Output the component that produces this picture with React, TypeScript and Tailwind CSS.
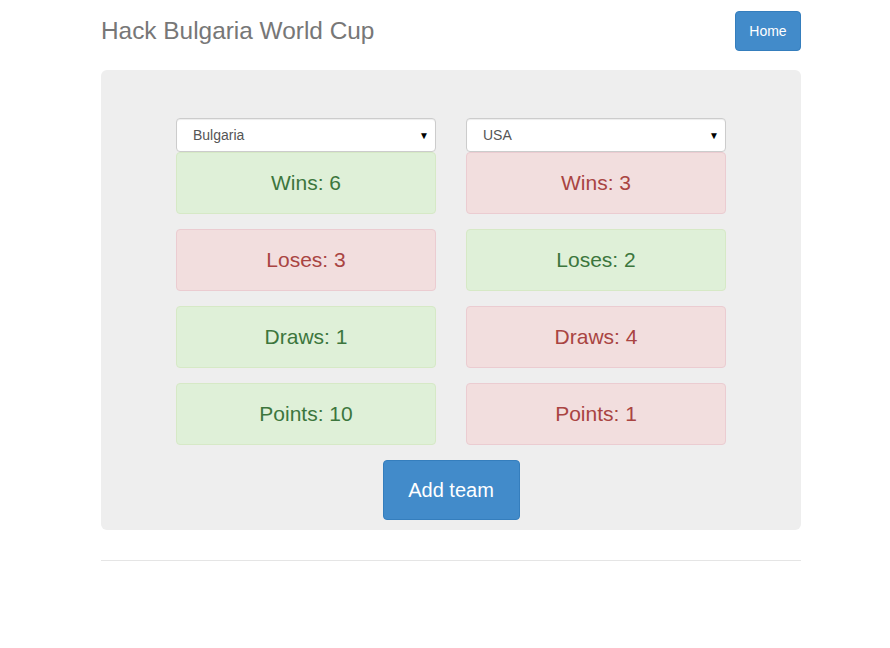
import React from "react";

const left = [
  { label: "Wins: 6", good: true },
  { label: "Loses: 3", good: false },
  { label: "Draws: 1", good: true },
  { label: "Points: 10", good: true },
];
const right = [
  { label: "Wins: 3", good: false },
  { label: "Loses: 2", good: true },
  { label: "Draws: 4", good: false },
  { label: "Points: 1", good: false },
];

function Select({ value }: { value: string }) {
  return (
    <div className="h-[34px] w-full flex items-center justify-between bg-white border border-[#ccc] rounded-[4px] shadow-[inset_0_1px_1px_rgba(0,0,0,0.075)] pl-[16px] pr-[6px] text-[14px] text-[#555]">
      <span>{value}</span>
      <span className="text-[10px] text-black">▼</span>
    </div>
  );
}

function Card({ label, good }: { label: string; good: boolean }) {
  return (
    <div
      className={
        good
          ? "h-[62px] flex items-center justify-center rounded-[4px] border border-[#d6e9c6] bg-[#dff0d8] text-[#3c763d] text-[21px]"
          : "h-[62px] flex items-center justify-center rounded-[4px] border border-[#ebccd1] bg-[#f2dede] text-[#a94442] text-[21px]"
      }
    >
      {label}
    </div>
  );
}

function Column({ team, items }: { team: string; items: { label: string; good: boolean }[] }) {
  return (
    <div className="w-[260px] flex flex-col">
      <Select value={team} />
      <div className="flex flex-col gap-[15px]">
        {items.map((it) => (
          <Card key={it.label} {...it} />
        ))}
      </div>
    </div>
  );
}

export default function App() {
  return (
    <div className="w-[890px] h-[648px] bg-white" style={{ fontFamily: '"Liberation Sans", Arial, sans-serif' }}>
      <div className="w-[700px] ml-[101px]">
        <div className="h-[70px] flex items-start justify-between">
          <h3 className="text-[24.4px] text-[#777] leading-none mt-[19px]">Hack Bulgaria World Cup</h3>
          <button className="mt-[11px] h-[40px] w-[66px] bg-[#428bca] border border-[#357ebd] rounded-[4px] text-white text-[14px]">
            Home
          </button>
        </div>
        <div className="bg-[#eee] rounded-[6px] pt-[48px] pb-[10px] flex flex-col items-center">
          <div className="flex gap-[30px]">
            <Column team="Bulgaria" items={left} />
            <Column team="USA" items={right} />
          </div>
          <button className="mt-[15px] w-[137px] h-[60px] bg-[#428bca] border border-[#357ebd] rounded-[4px] text-white text-[20px]">
            Add team
          </button>
        </div>
        <div className="mt-[30px] border-t border-[#e5e5e5]" />
      </div>
    </div>
  );
}
